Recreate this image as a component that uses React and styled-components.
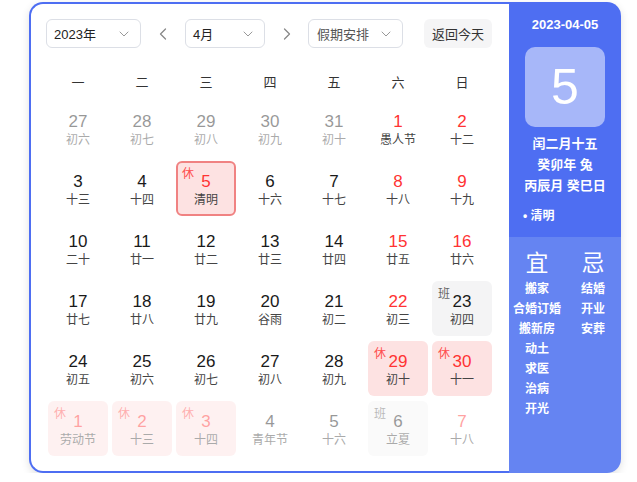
import styled, { createGlobalStyle } from "styled-components"
import { ChevronDown, ChevronLeft, ChevronRight } from "lucide-react"

const GlobalStyle = createGlobalStyle`
    body {
        margin : 0;
        background : #fff;
        font-family : "Liberation Sans", "Noto Sans CJK SC", sans-serif;
    }
`

const Page = styled.div`
    padding : 2px 0 0 29px;
`
const Card = styled.div`
    display : flex;
    width : 592px;
    height : 471px;
    border-radius : 14px;
    box-shadow : 0 3px 8px rgba(0, 0, 0, 0.12);
`
const Main = styled.div`
    width : 480px;
    box-sizing : border-box;
    border : 2px solid #4e6ef2;
    border-right : none;
    border-radius : 14px 0 0 14px;
    padding : 15px 15px 0 15px;
    background : #fff;
`
const Header = styled.div`
    display : flex;
    align-items : center;
    height : 29px;
`
const Select = styled.div`
    width : ${p => p.$w}px;
    height : 29px;
    box-sizing : border-box;
    border : 1px solid #dcdfe6;
    border-radius : 6px;
    display : flex;
    align-items : center;
    justify-content : space-between;
    padding : 0 8px 0 ${p => p.$pl || 7}px;
    font-size : 13px;
    color : ${p => p.$muted ? "#555" : "#222"};
    svg { color : #999; }
`
const Arrow = styled.div`
    width : ${p => p.$w}px;
    display : flex;
    justify-content : center;
    color : #888;
`
const Spacer = styled.div`
    flex : 1;
`
const TodayButton = styled.div`
    width : 68px;
    height : 29px;
    margin-right : 2px;
    border-radius : 6px;
    background : #f5f5f6;
    color : #333;
    font-size : 13px;
    display : flex;
    align-items : center;
    justify-content : center;
`
const Week = styled.div`
    display : grid;
    grid-template-columns : repeat(7, 60px);
    column-gap : 4px;
    margin : 14px 0 0 2px;
    height : 38px;
    align-items : center;
    justify-items : center;
    font-size : 13px;
    color : #333;
`
const Grid = styled.div`
    display : grid;
    grid-template-columns : repeat(7, 60px);
    grid-auto-rows : 55px;
    gap : 5px 4px;
    margin : 1px 0 0 2px;
`
const cellBg = { rest: "#fde2e2", work: "#f4f4f5" }
const Cell = styled.div`
    position : relative;
    box-sizing : border-box;
    border-radius : 6px;
    background : ${p => cellBg[p.$tag] || "transparent"};
    border : 2px solid ${p => p.$selected ? "#f08282" : "transparent"};
    opacity : ${p => p.$other ? 0.45 : 1};
    display : flex;
    flex-direction : column;
    align-items : center;
    justify-content : center;
    padding-top : 3px;
`
const Num = styled.div`
    font-size : 17px;
    line-height : 20px;
    color : ${p => p.$red ? "#ff3333" : "#1a1a1a"};
`
const Lunar = styled.div`
    font-size : 12px;
    line-height : 17px;
    color : #444;
`
const Tag = styled.span`
    position : absolute;
    left : 4px;
    top : 1px;
    font-size : 12px;
    color : ${p => p.$tag === "rest" ? "#ff4d4d" : "#666"};
`

const Side = styled.div`
    width : 112px;
    display : flex;
    flex-direction : column;
    border-radius : 0 14px 14px 0;
    overflow : hidden;
    color : #fff;
`
const SideTop = styled.div`
    height : 235px;
    background : #4e6ef2;
    display : flex;
    flex-direction : column;
    align-items : center;
    padding-top : 14px;
    box-sizing : border-box;
`
const DateText = styled.div`
    font-size : 13px;
    font-weight : bold;
    line-height : 18px;
`
const DayBox = styled.div`
    width : 80px;
    height : 80px;
    margin : 13px 0 6px;
    border-radius : 10px;
    background : rgba(255, 255, 255, 0.5);
    display : flex;
    align-items : center;
    justify-content : center;
    font-size : 50px;
    font-family : "Liberation Sans", sans-serif;
`
const InfoLine = styled.div`
    font-size : 13px;
    line-height : 21px;
    font-weight : bold;
`
const Term = styled.div`
    align-self : flex-start;
    margin : 10px 0 0 14px;
    font-size : 12px;
    font-weight : bold;
    line-height : 20px;
`
const SideBottom = styled.div`
    flex : 1;
    background : #6584f2;
    display : grid;
    grid-template-columns : 1fr 1fr;
    padding-top : 13px;
`
const Col = styled.div`
    display : flex;
    flex-direction : column;
    align-items : center;
    padding-left : ${p => p.$pl || 0}px;
`
const Big = styled.div`
    font-size : 23px;
    line-height : 26px;
    margin-bottom : 3px;
`
const Item = styled.div`
    font-size : 12px;
    font-weight : bold;
    line-height : 20px;
    white-space : nowrap;
`

// n, lunar, red, tag, other month, selected
const days = [
    [27, "初六", 0, null, 1], [28, "初七", 0, null, 1], [29, "初八", 0, null, 1], [30, "初九", 0, null, 1], [31, "初十", 0, null, 1], [1, "愚人节", 1], [2, "十二", 1],
    [3, "十三"], [4, "十四"], [5, "清明", 1, "rest", 0, 1], [6, "十六"], [7, "十七"], [8, "十八", 1], [9, "十九", 1],
    [10, "二十"], [11, "廿一"], [12, "廿二"], [13, "廿三"], [14, "廿四"], [15, "廿五", 1], [16, "廿六", 1],
    [17, "廿七"], [18, "廿八"], [19, "廿九"], [20, "谷雨"], [21, "初二"], [22, "初三", 1], [23, "初四", 0, "work"],
    [24, "初五"], [25, "初六"], [26, "初七"], [27, "初八"], [28, "初九"], [29, "初十", 1, "rest"], [30, "十一", 1, "rest"],
    [1, "劳动节", 1, "rest", 1], [2, "十三", 1, "rest", 1], [3, "十四", 1, "rest", 1], [4, "青年节", 0, null, 1], [5, "十六", 0, null, 1], [6, "立夏", 0, "work", 1], [7, "十八", 1, null, 1],
]

const good = ["搬家", "合婚订婚", "搬新房", "动土", "求医", "治病", "开光"]
const bad = ["结婚", "开业", "安葬"]

const App = () => {
    return (
        <Page>
            <GlobalStyle />
            <Card>
                <Main>
                    <Header>
                        <Select $w={95}>2023年<ChevronDown size={16} strokeWidth={1.5} /></Select>
                        <Arrow $w={44}><ChevronLeft size={20} strokeWidth={1.5} /></Arrow>
                        <Select $w={80}>4月<ChevronDown size={16} strokeWidth={1.5} /></Select>
                        <Arrow $w={43}><ChevronRight size={20} strokeWidth={1.5} /></Arrow>
                        <Select $w={95} $muted $pl={8}>假期安排<ChevronDown size={16} strokeWidth={1.5} /></Select>
                        <Spacer />
                        <TodayButton>返回今天</TodayButton>
                    </Header>
                    <Week>
                        {["一", "二", "三", "四", "五", "六", "日"].map(d => <div key={d}>{d}</div>)}
                    </Week>
                    <Grid>
                        {days.map(([n, lunar, red, tag, other, selected], i) => (
                            <Cell key={i} $tag={tag} $other={other} $selected={selected}>
                                {tag && <Tag $tag={tag}>{tag === "rest" ? "休" : "班"}</Tag>}
                                <Num $red={red}>{n}</Num>
                                <Lunar>{lunar}</Lunar>
                            </Cell>
                        ))}
                    </Grid>
                </Main>
                <Side>
                    <SideTop>
                        <DateText>2023-04-05</DateText>
                        <DayBox>5</DayBox>
                        <InfoLine>闰二月十五</InfoLine>
                        <InfoLine>癸卯年 兔</InfoLine>
                        <InfoLine>丙辰月 癸巳日</InfoLine>
                        <Term>• 清明</Term>
                    </SideTop>
                    <SideBottom>
                        <Col>
                            <Big>宜</Big>
                            {good.map(g => <Item key={g}>{g}</Item>)}
                        </Col>
                        <Col>
                            <Big>忌</Big>
                            {bad.map(b => <Item key={b}>{b}</Item>)}
                        </Col>
                    </SideBottom>
                </Side>
            </Card>
        </Page>
    )
}

export default App
